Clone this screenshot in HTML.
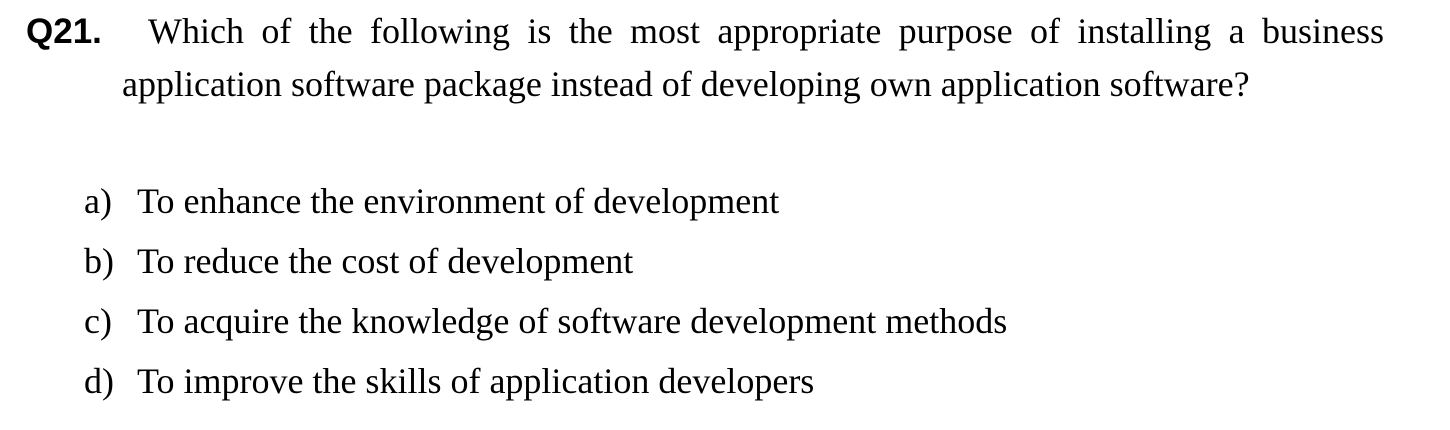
<!DOCTYPE html>
<html><head><style>
body{margin:0;width:1450px;height:430px;background:#fff;position:relative;font-family:"Liberation Serif",serif;color:#000;}
.t{position:absolute;white-space:nowrap;font-size:36px;line-height:1;}
.q{position:absolute;left:26px;top:14px;font-family:"Liberation Sans",sans-serif;font-weight:bold;font-size:35px;line-height:1;}
</style></head><body>
<div class="q">Q21.</div>
<div class="t" style="left:148px;top:13px;width:1236px;display:flex;justify-content:space-between;"><span>Which</span><span>of</span><span>the</span><span>following</span><span>is</span><span>the</span><span>most</span><span>appropriate</span><span>purpose</span><span>of</span><span>installing</span><span>a</span><span>business</span></div>
<div class="t" style="left:122px;top:66px;">application software package instead of developing own application software?</div>
<div class="t" style="left:84px;top:183px;">a)</div><div class="t" style="left:137px;top:183px;">To enhance the environment of development</div>
<div class="t" style="left:84px;top:243px;">b)</div><div class="t" style="left:137px;top:243px;">To reduce the cost of development</div>
<div class="t" style="left:84px;top:303px;">c)</div><div class="t" style="left:137px;top:303px;">To acquire the knowledge of software development methods</div>
<div class="t" style="left:84px;top:363px;">d)</div><div class="t" style="left:137px;top:363px;">To improve the skills of application developers</div>
</body></html>
